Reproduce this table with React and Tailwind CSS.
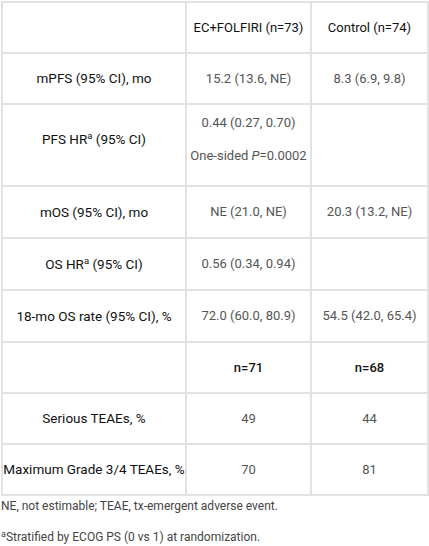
import React from 'react';

const rows = [
  { label: 'mPFS (95% CI), mo', a: '15.2 (13.6, NE)', b: '8.3 (6.9, 9.8)', h: 'h-[51px]' },
  { label: 'PFS HR', sup: true, tail: ' (95% CI)', a: '0.44 (0.27, 0.70)', pval: true, b: '', h: 'h-[82px]' },
  { label: 'mOS (95% CI), mo', a: 'NE (21.0, NE)', b: '20.3 (13.2, NE)', h: 'h-[52px]' },
  { label: 'OS HR', sup: true, tail: ' (95% CI)', a: '0.56 (0.34, 0.94)', b: '', h: 'h-[52px]' },
  { label: '18-mo OS rate (95% CI), %', a: '72.0 (60.0, 80.9)', b: '54.5 (42.0, 65.4)', h: 'h-[52px]' },
  { label: '', a: 'n=71', b: 'n=68', head: true, h: 'h-[51px]' },
  { label: 'Serious TEAEs, %', a: '49', b: '44', h: 'h-[51px]' },
  { label: 'Maximum Grade 3/4 TEAEs, %', a: '70', b: '81', h: 'h-[51px]' },
];

const cell = 'border-2 border-[#e2e2e2] text-center align-middle px-0 whitespace-nowrap';

export default function App() {
  return (
    <div className="bg-white w-[429px] h-[546px] overflow-hidden font-['Roboto',sans-serif] text-[13px]">
      <table className="table-fixed border-collapse w-[426px] ml-[1px] mt-[1px]">
        <colgroup>
          <col className="w-[184px]" />
          <col className="w-[125px]" />
          <col className="w-[117px]" />
        </colgroup>
        <tbody>
          <tr className="h-[51px]">
            <td className={cell}></td>
            <td className={`${cell} text-[#111]`}>EC+FOLFIRI (n=73)</td>
            <td className={`${cell} text-[#111]`}>Control (n=74)</td>
          </tr>
          {rows.map((r, i) => {
            const pad = r.pval ? 'pt-0 pb-[12px]' : 'py-0';
            return (
              <tr key={i} className={r.h}>
                <td className={`${cell} ${pad} text-[#111] text-[13.5px]`}>
                  {r.label}
                  {r.sup && <sup className="text-[9.5px]">a</sup>}
                  {r.tail}
                </td>
                <td className={`${cell} ${pad} ${r.head ? 'text-[#111] font-medium' : 'text-[#555]'}`}>
                  {r.pval ? (
                    <div className="flex flex-col gap-[14px]">
                      <span>{r.a}</span>
                      <span>One-sided <i>P</i>=0.0002</span>
                    </div>
                  ) : r.a}
                </td>
                <td className={`${cell} ${pad} ${r.head ? 'text-[#111] font-medium' : 'text-[#555]'}`}>{r.b}</td>
              </tr>
            );
          })}
        </tbody>
      </table>
      <div className="text-[12px] text-[#444] pl-[1px]">
        <p className="leading-[14px] mt-[3px]">NE, not estimable; TEAE, tx-emergent adverse event.</p>
        <p className="leading-[14px] mt-[17px]"><sup className="text-[9px]">a</sup>Stratified by ECOG PS (0 vs 1) at randomization.</p>
      </div>
    </div>
  );
}
